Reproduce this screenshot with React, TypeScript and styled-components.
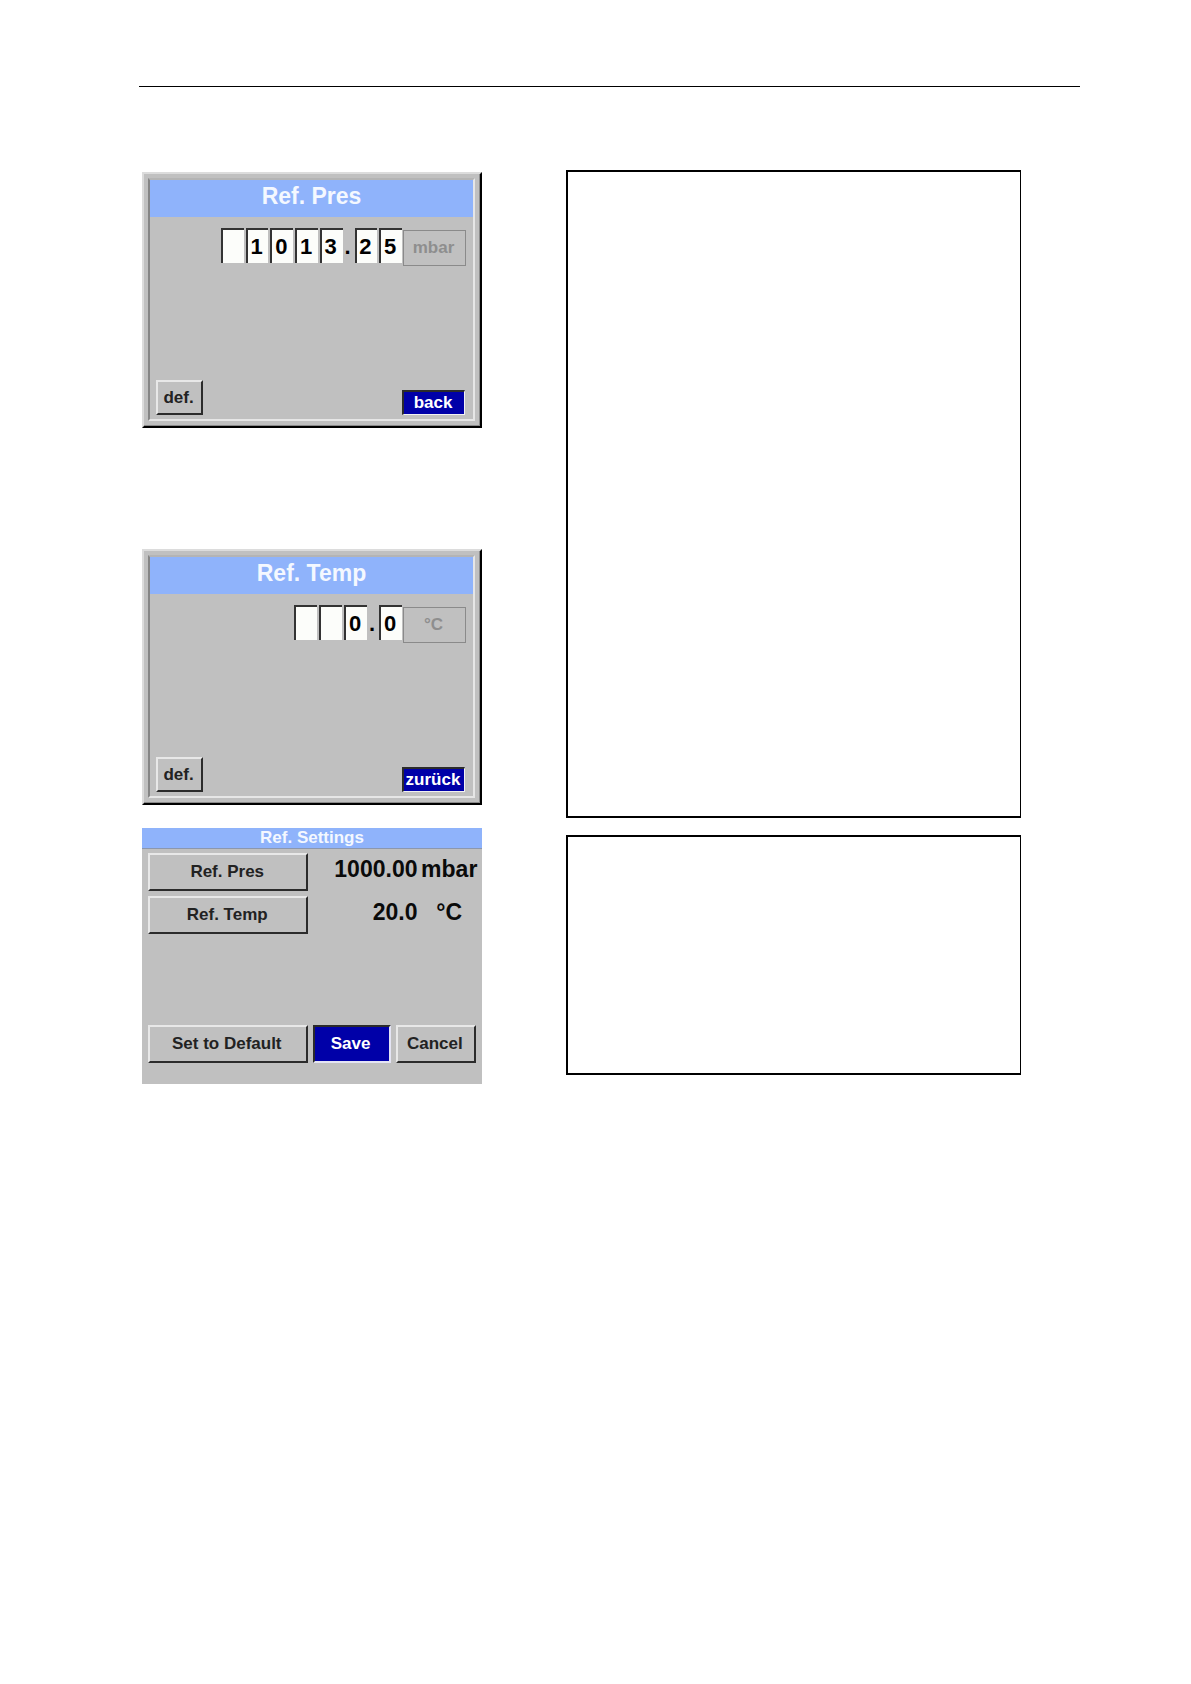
import styled, { createGlobalStyle } from "styled-components";

const GlobalStyle = createGlobalStyle`
  * {
    box-sizing: border-box;
  }
  body {
    margin: 0;
    background-color: #fff;
    font-family: "Liberation Sans", Arial, sans-serif;
  }
`;

interface EditorProps {
  title: string;
  name: string;
  digits: string[];
  width: number;
  unit: string;
  backLabel: string;
}

function ValueEditor({ title, name, digits, width, unit, backLabel }: EditorProps) {
  return (
    <Screen>
      <ScreenInner>
        <ScreenTitle>{title}</ScreenTitle>
        <Readout>
          <DigitRow rowWidth={width}>
            {digits.map((digit, index) =>
              digit === "." ? (
                <Point key={index}>.</Point>
              ) : (
                <Digit
                  key={index}
                  type="text"
                  maxLength={1}
                  defaultValue={digit}
                  aria-label={`${name} ${index + 1}`}
                />
              )
            )}
          </DigitRow>
          <UnitButton disabled>{unit}</UnitButton>
        </Readout>
        <ScreenFooter>
          <DefButton>def.</DefButton>
          <BackButton>{backLabel}</BackButton>
        </ScreenFooter>
      </ScreenInner>
    </Screen>
  );
}

function RefSettings() {
  return (
    <SettingsScreen>
      <SettingsTitle>Ref. Settings</SettingsTitle>
      <SettingsList>
        <PanelButton>Ref. Pres</PanelButton>
        <Value>1000.00</Value>
        <ValueUnit>mbar</ValueUnit>
        <PanelButton>Ref. Temp</PanelButton>
        <Value>20.0</Value>
        <ValueUnit>°C</ValueUnit>
      </SettingsList>
      <SettingsFooter>
        <PanelButton>Set to Default</PanelButton>
        <SaveButton>Save</SaveButton>
        <PanelButton>Cancel</PanelButton>
      </SettingsFooter>
    </SettingsScreen>
  );
}

function App() {
  return (
    <>
      <GlobalStyle />
      <Page>
        <Rule />
        <Columns>
          <ScreenColumn>
            <ValueEditor
              title="Ref. Pres"
              name="Pressure digit"
              digits={["", "1", "0", "1", "3", ".", "2", "5"]}
              width={181}
              unit="mbar"
              backLabel="back"
            />
            <Spacer />
            <ValueEditor
              title="Ref. Temp"
              name="Temperature digit"
              digits={["", "", "0", ".", "0"]}
              width={108}
              unit="°C"
              backLabel="zurück"
            />
            <RefSettings />
          </ScreenColumn>
          <NoteColumn>
            <Note minHeight={648} />
            <Note minHeight={240} />
          </NoteColumn>
        </Columns>
      </Page>
    </>
  );
}

const Page = styled.main`
  padding: 86px 111px 86px 139px;
`;
const Rule = styled.hr`
  margin: 0;
  border: 0;
  border-top: 1px solid #000;
`;
const Columns = styled.div`
  display: grid;
  grid-template-columns: 340fr 455fr;
  align-items: start;
  gap: 84px;
  padding: 83px 59px 0 3px;
`;
const ScreenColumn = styled.div`
  display: flex;
  flex-direction: column;
  gap: 23px;
  padding-top: 2px;
`;
const Spacer = styled.div`
  height: 75px;
`;
const NoteColumn = styled.div`
  display: flex;
  flex-direction: column;
  gap: 17px;
`;
const Note = styled.section<{ minHeight: number }>`
  min-height: ${(props) => props.minHeight}px;
  border: 2px solid #000;
  border-right-width: 1px;
`;

const Screen = styled.section`
  display: flex;
  min-height: 256px;
  padding: 4px 5px 5px 4px;
  background-color: #c0c0c0;
  border: 2px solid;
  border-color: #dcdcdc #000 #000 #dcdcdc;
  box-shadow: inset -1px -1px 0 #8a8a8a;
`;
const ScreenInner = styled.div`
  flex: 1;
  display: flex;
  flex-direction: column;
  border: 2px solid;
  border-color: #b4b4b4 #e6e6e6 #e6e6e6 #858585;
`;
const ScreenTitle = styled.h2`
  margin: 0;
  padding-bottom: 5px;
  background-color: #8fb3fb;
  color: #f4f8ff;
  font-size: 23px;
  line-height: 32px;
  text-align: center;
`;
const Readout = styled.div`
  flex: 1;
  display: flex;
  justify-content: flex-end;
  align-items: flex-start;
  gap: 1px;
  padding: 11px 7px 0 6px;
`;
const DigitRow = styled.div<{ rowWidth: number }>`
  display: flex;
  gap: 2px;
  width: ${(props) => props.rowWidth}px;
`;
const Digit = styled.input`
  flex: 1;
  min-width: 0;
  height: 35px;
  padding: 0 3px 0 0;
  background-color: #fcfdfa;
  border: 0 solid #333;
  border-width: 2px 0 0 2px;
  border-radius: 0;
  color: #000;
  font-family: inherit;
  font-size: 22px;
  font-weight: bold;
  text-align: center;
`;
const Point = styled.span`
  width: 8px;
  padding: 2px 2px 0 0;
  font-size: 22px;
  font-weight: bold;
  line-height: 33px;
  text-align: center;
`;
const Button = styled.button`
  padding: 0 2px 0 0;
  background-color: #c0c0c0;
  border: 2px solid;
  border-color: #e8e8e8 #2b2b2b #2b2b2b #e8e8e8;
  border-radius: 0;
  color: #222;
  font-family: inherit;
  font-size: 17px;
  font-weight: bold;
  white-space: nowrap;
`;
const UnitButton = styled(Button)`
  width: 63px;
  height: 36px;
  margin-top: 2px;
  border: 1px solid #8a8a8a;
  color: #8e8e8e;
`;
const ScreenFooter = styled.div`
  display: flex;
  justify-content: space-between;
  align-items: flex-end;
  padding: 0 8px 4px 6px;
`;
const DefButton = styled(Button)`
  width: 47px;
  height: 35px;
`;
const BackButton = styled(Button)`
  width: 63px;
  height: 25px;
  background-color: #0000a8;
  border-width: 2px 1px 1px 2px;
  border-color: #2b2b2b #f2f2f2 #f2f2f2 #2b2b2b;
  color: #fff;
`;

const SettingsScreen = styled.section`
  display: flex;
  flex-direction: column;
  min-height: 256px;
  background-color: #c0c0c0;
`;
const SettingsTitle = styled.h2`
  height: 21px;
  margin: 0;
  background-color: #8fb3fb;
  border-bottom: 1px solid #8c97ad;
  color: #f4f8ff;
  font-size: 17px;
  line-height: 20px;
  text-align: center;
`;
const SettingsList = styled.div`
  flex: 1;
  display: grid;
  grid-template-columns: 159fr 111fr 57fr;
  grid-auto-rows: 38px;
  row-gap: 5px;
  padding: 4px 4px 0 6px;
`;
const PanelButton = styled(Button)`
  height: 38px;
`;
const SaveButton = styled(PanelButton)`
  background-color: #0000a8;
  border-color: #2b2b2b #e4e4f4 #e4e4f4 #2b2b2b;
  color: #fff;
`;
const ValueUnit = styled.span`
  color: #0a0a0a;
  font-size: 23px;
  font-weight: bold;
  line-height: 33px;
  text-align: center;
`;
const Value = styled.output`
  padding-right: 3px;
  color: #0a0a0a;
  font-size: 23px;
  font-weight: bold;
  line-height: 33px;
  text-align: right;
`;
const SettingsFooter = styled.div`
  display: grid;
  grid-template-columns: 159fr 78fr 80fr;
  gap: 5px;
  padding: 0 6px 21px;
`;

export default App;
